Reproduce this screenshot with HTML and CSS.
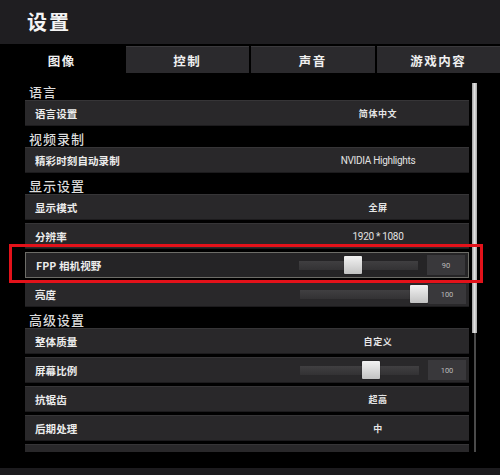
FILE: index.html
```html
<!DOCTYPE html>
<html lang="zh-CN">
<head>
<meta charset="utf-8">
<title>设置</title>
<link rel="stylesheet" href="styles.css">
</head>
<body>
<div class="app">
  <header class="titlebar"><h1>设置</h1></header>
  <nav class="tabs">
    <div class="tab active">图像</div>
    <div class="tab">控制</div>
    <div class="tab">声音</div>
    <div class="tab">游戏内容</div>
  </nav>
  <main class="content">
    <div class="list">
      <div class="section">语言</div>
      <div class="row"><span class="label">语言设置</span><span class="value">简体中文</span></div>
      <div class="section">视频录制</div>
      <div class="row"><span class="label">精彩时刻自动录制</span><span class="value latin">NVIDIA Highlights</span></div>
      <div class="section">显示设置</div>
      <div class="row"><span class="label">显示模式</span><span class="value">全屏</span></div>
      <div class="row"><span class="label">分辨率</span><span class="value latin">1920 * 1080</span></div>
      <div class="row focus"><span class="label">FPP 相机视野</span>
        <span class="slider"><span class="track"><span class="knob" style="left:45%"></span></span><span class="num">90</span></span></div>
      <div class="row"><span class="label">亮度</span>
        <span class="slider"><span class="track"><span class="knob" style="left:100%"></span></span><span class="num">100</span></span></div>
      <div class="section">高级设置</div>
      <div class="row"><span class="label">整体质量</span><span class="value">自定义</span></div>
      <div class="row"><span class="label">屏幕比例</span>
        <span class="slider"><span class="track"><span class="knob" style="left:60%"></span></span><span class="num">100</span></span></div>
      <div class="row"><span class="label">抗锯齿</span><span class="value">超高</span></div>
      <div class="row"><span class="label">后期处理</span><span class="value">中</span></div>
      <div class="row"><span class="label"></span><span class="value"></span></div>
    </div>
    <div class="scrollbar"><div class="thumb"></div></div>
  </main>
  <footer class="bottom"></footer>
  <div class="annot"></div>
</div>
</body>
</html>
```
FILE: styles.css
```css
html, body {
  margin: 0;
  padding: 0;
  background: #000;
}
body {
  width: 500px;
  height: 475px;
  overflow: hidden;
  font-family: "Noto Sans CJK SC", "Noto Sans", sans-serif;
}
.app {
  position: relative;
  width: 500px;
  height: 475px;
  background: #000;
}
.titlebar {
  height: 44px;
  background: #1f1e21;
  display: flex;
  align-items: center;
  padding-left: 27px;
  box-sizing: border-box;
}
.titlebar h1 {
  margin: 0;
  font-size: 20px;
  font-weight: 700;
  letter-spacing: 2px;
  color: #f4f4f4;
  line-height: 1;
}
.tabs {
  margin-top: 2px;
  height: 27px;
  display: grid;
  grid-template-columns: repeat(4, 1fr);
  gap: 2px;
}
.tab {
  background: #2b2a2d;
  border-top: 1px solid #3b3a3d;
  display: flex;
  align-items: center;
  justify-content: center;
  font-size: 12.5px;
  font-weight: 700;
  letter-spacing: 1.5px;
  color: #f0f0f0;
}
.tab.active {
  background: #000;
  border-top-color: #000;
}
.content {
  display: flex;
  gap: 3px;
  padding: 9px 0 0 25px;
  height: 370px;
}
.list {
  width: 444px;
  height: 370px;
  overflow: hidden;
  display: flex;
  flex-direction: column;
}
.section {
  flex-shrink: 0;
  height: 18px;
  line-height: 19px;
  padding-left: 4px;
  font-size: 13px;
  font-weight: 500;
  letter-spacing: 1px;
  color: #dcdcdc;
}
.row {
  flex-shrink: 0;
  height: 26px;
  margin-bottom: 3px;
  box-sizing: border-box;
  background: #29282a;
  border-top: 1px solid #363537;
  border-bottom: 1px solid #1c1b1d;
  display: grid;
  grid-template-columns: 1fr 176px;
  align-items: center;
  padding-right: 3px;
}
.row.focus {
  background: #252426;
  border: 1px solid #6d6d68;
}
.label {
  padding-left: 10px;
  font-size: 10.5px;
  font-weight: 700;
  letter-spacing: 0.1px;
  color: #ececec;
  white-space: nowrap;
}
.value {
  text-align: center;
  font-size: 9px;
  font-weight: 700;
  letter-spacing: 0.6px;
  color: #e6e6e6;
}
.value.latin {
  font-family: Roboto, "Liberation Sans", sans-serif;
  font-size: 10px;
  font-weight: 400;
  letter-spacing: -0.3px;
  color: #e2e2e2;
}
.slider {
  display: flex;
  align-items: center;
  padding-left: 10px;
}
.track {
  position: relative;
  width: 119px;
  height: 9px;
  background: linear-gradient(#403f41, #333234);
}
.knob {
  position: absolute;
  top: 50%;
  width: 18px;
  height: 18px;
  transform: translate(-50%, -50%);
  background: linear-gradient(#f2f2f2, #c2c2c2);
  border-radius: 1px;
  box-shadow: 0 0 1px rgba(0,0,0,0.6);
}
.num {
  margin-left: 9px;
  width: 38px;
  height: 20px;
  background: #39383b;
  display: flex;
  align-items: center;
  justify-content: center;
  font-family: Roboto, "Liberation Sans", sans-serif;
  font-size: 7.5px;
  color: #bcbcbc;
}
.scrollbar {
  width: 5px;
  margin-top: 1px;
  height: 369px;
  background: linear-gradient(to right, transparent 1.5px, #4a4a4a 1.5px, #4a4a4a 3.5px, transparent 3.5px);
}
.thumb {
  height: 250px;
  background: linear-gradient(to right, #9c9c9c, #e2e2e2, #a6a6a6);
}
.bottom {
  margin-top: 16px;
  height: 7px;
  background: #1c1b1e;
}
.annot {
  position: absolute;
  left: 9px;
  top: 244px;
  width: 474px;
  height: 39px;
  box-sizing: border-box;
  border: 3px solid #e3121a;
}
```
